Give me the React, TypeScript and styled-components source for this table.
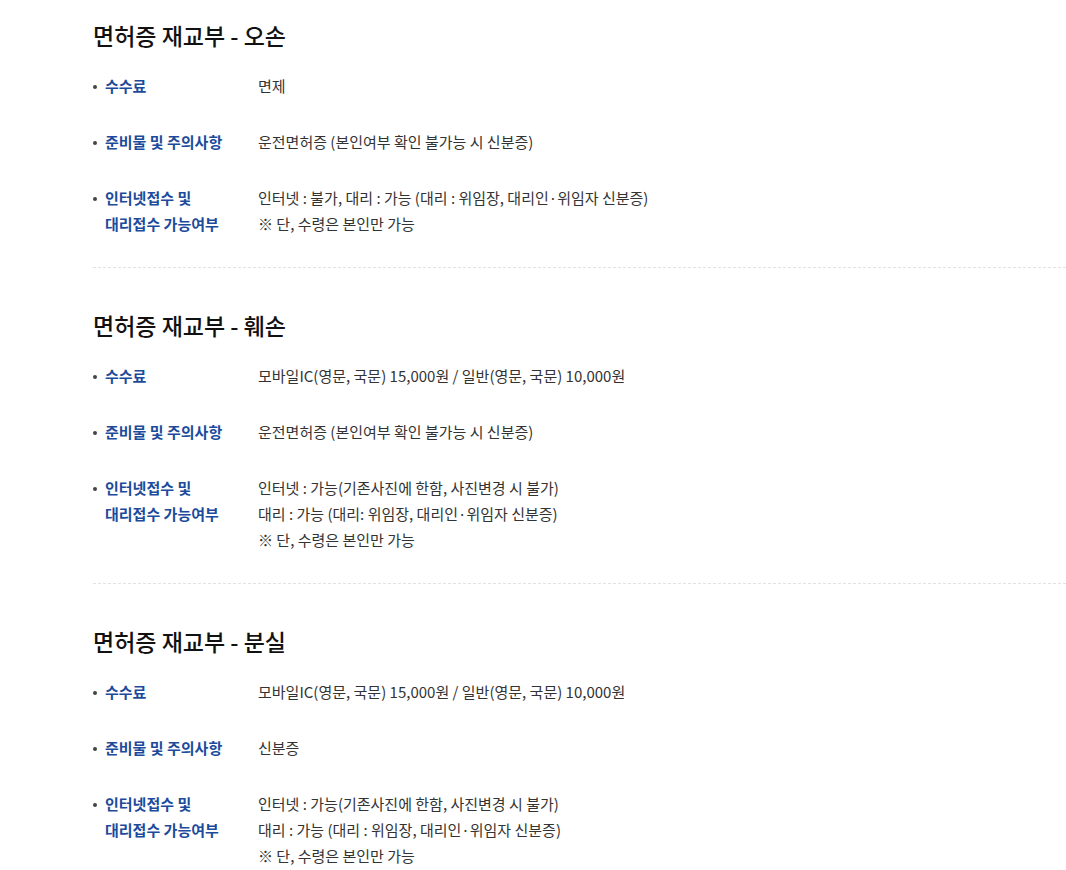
import React from 'react';
import styled, { createGlobalStyle } from 'styled-components';

const GlobalStyle = createGlobalStyle`
    body {
        margin: 0;
        background: #fff;
        font-family: "Noto Sans CJK KR", "Noto Sans", sans-serif;
        color: #333;
    }
`;

const Page = styled.div`
    padding: 19px 0 0 93px;
`;

const Section = styled.section`
    padding-bottom: 30px;
    margin-bottom: 41px;
    border-bottom: 1px dashed #e2e2e2;

    &:last-child {
        border-bottom: none;
        margin-bottom: 0;
    }
`;

const Title = styled.h2`
    margin: 0 0 22px;
    font-size: 23px;
    line-height: 32px;
    font-weight: 500;
    color: #111;
`;

const InfoList = styled.ul`
    list-style: none;
    margin: 0;
    padding: 0;
    display: flex;
    flex-direction: column;
    gap: 30px;
`;

const InfoRow = styled.li`
    display: grid;
    grid-template-columns: 165px 1fr;
    font-size: 15px;
    line-height: 26px;
`;

const Label = styled.div`
    position: relative;
    padding-left: 12px;
    color: #1c4b9b;
    font-weight: 700;

    &::before {
        content: '';
        position: absolute;
        left: 0;
        top: 12px;
        width: 4px;
        height: 4px;
        border-radius: 50%;
        background: #444;
    }
`;

const Value = styled.div`
    color: #333;
`;

type Item = { label: string[]; value: string[] };
type Block = { title: string; items: Item[] };

const fee = '모바일IC(영문, 국문) 15,000원 / 일반(영문, 국문) 10,000원';

const blocks: Block[] = [
    {
        title: '면허증 재교부 - 오손',
        items: [
            { label: ['수수료'], value: ['면제'] },
            { label: ['준비물 및 주의사항'], value: ['운전면허증 (본인여부 확인 불가능 시 신분증)'] },
            {
                label: ['인터넷접수 및', '대리접수 가능여부'],
                value: ['인터넷 : 불가, 대리 : 가능 (대리 : 위임장, 대리인·위임자 신분증)', '※ 단, 수령은 본인만 가능'],
            },
        ],
    },
    {
        title: '면허증 재교부 - 훼손',
        items: [
            { label: ['수수료'], value: [fee] },
            { label: ['준비물 및 주의사항'], value: ['운전면허증 (본인여부 확인 불가능 시 신분증)'] },
            {
                label: ['인터넷접수 및', '대리접수 가능여부'],
                value: [
                    '인터넷 : 가능(기존사진에 한함, 사진변경 시 불가)',
                    '대리 : 가능 (대리: 위임장, 대리인·위임자 신분증)',
                    '※ 단, 수령은 본인만 가능',
                ],
            },
        ],
    },
    {
        title: '면허증 재교부 - 분실',
        items: [
            { label: ['수수료'], value: [fee] },
            { label: ['준비물 및 주의사항'], value: ['신분증'] },
            {
                label: ['인터넷접수 및', '대리접수 가능여부'],
                value: [
                    '인터넷 : 가능(기존사진에 한함, 사진변경 시 불가)',
                    '대리 : 가능 (대리 : 위임장, 대리인·위임자 신분증)',
                    '※ 단, 수령은 본인만 가능',
                ],
            },
        ],
    },
];

const App = () => {
    return (
        <React.Fragment>
            <GlobalStyle />
            <Page>
                {blocks.map((block) => (
                    <Section key={block.title}>
                        <Title>{block.title}</Title>
                        <InfoList>
                            {block.items.map((item, index) => (
                                <InfoRow key={index}>
                                    <Label>
                                        {item.label.map((line, i) => (
                                            <div key={i}>{line}</div>
                                        ))}
                                    </Label>
                                    <Value>
                                        {item.value.map((line, i) => (
                                            <div key={i}>{line}</div>
                                        ))}
                                    </Value>
                                </InfoRow>
                            ))}
                        </InfoList>
                    </Section>
                ))}
            </Page>
        </React.Fragment>
    );
};

export default App;
